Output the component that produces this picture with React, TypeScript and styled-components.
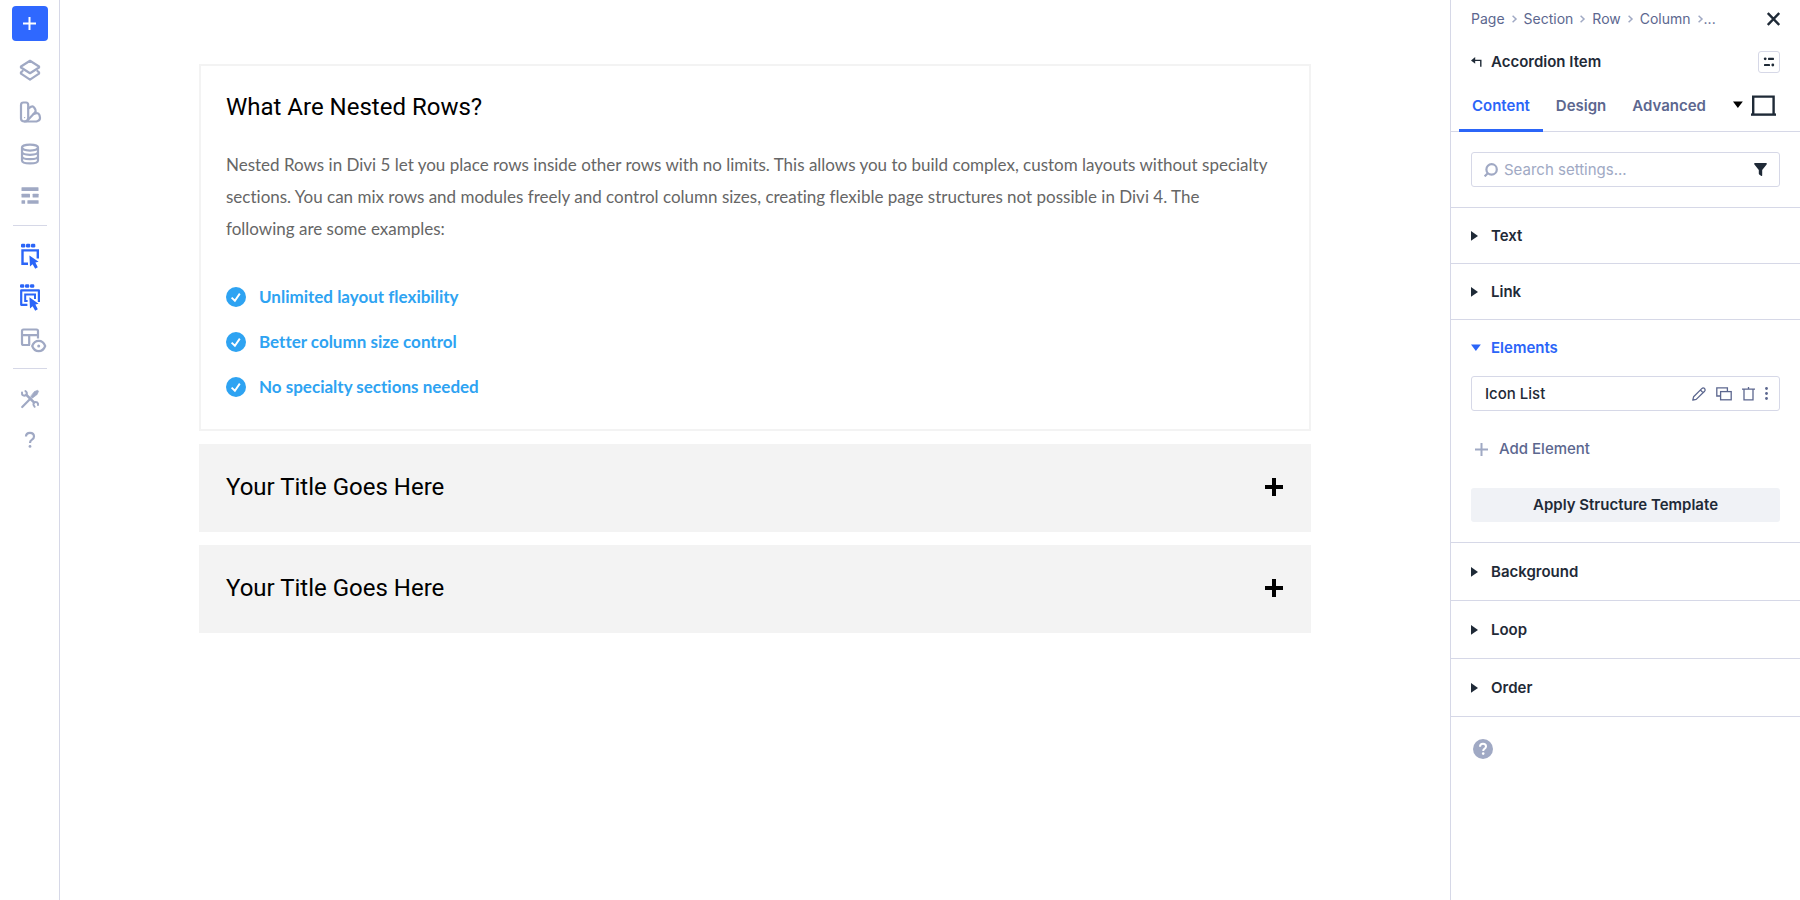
import React, { useState } from 'react';
import styled, { createGlobalStyle } from 'styled-components';

const c = {
  blue: '#2b65f8',
  ink: '#1f2a37',
  slate: '#5c678f',
  muted: '#a0a9c4',
  line: '#d6d8e7',
  sky: '#2ea3f2',
  sand: '#f3f3f3',
};

const GlobalStyle = createGlobalStyle`
  *, *::before, *::after { box-sizing: border-box; }
  body { margin: 0; background: #fff; }
  button, input { font: inherit; color: inherit; }
  button { background: none; border: 0; padding: 0; cursor: pointer; }
  svg { display: block; flex: none; }
`;

const Shell = styled.div`
  display: grid;
  grid-template-columns: 60px minmax(0, 1fr) 350px;
  min-height: 100vh;
  font-family: Inter, 'Liberation Sans', sans-serif;
  font-size: 15px;
  line-height: 20px;
  color: ${c.ink};
`;

const Rail = styled.nav`
  display: flex;
  flex-direction: column;
  align-items: center;
  border-right: 1px solid ${c.line};
  padding-top: 6px;
`;

const AddButton = styled.button`
  display: grid;
  place-items: center;
  width: 36px;
  height: 35px;
  margin-bottom: 8px;
  border-radius: 4px;
  background: #2f68ff;
`;

const RailButton = styled.button<{ $active?: boolean }>`
  display: grid;
  place-items: center;
  width: 42px;
  height: 42px;
  color: ${(p) => (p.$active ? c.blue : c.muted)};
`;

const RailDivider = styled.hr`
  width: 34px;
  margin: 8px 0;
  border: 0;
  border-top: 1px solid ${c.line};
`;

const Canvas = styled.main`
  padding-top: 64px;
`;

const AccordionList = styled.div`
  display: flex;
  flex-direction: column;
  gap: 13px;
  width: 80%;
  margin: 0 auto;
`;

const Item = styled.section<{ $open?: boolean }>`
  border: 2px solid ${c.sand};
  background: ${(p) => (p.$open ? '#fff' : c.sand)};
`;

const ItemTitle = styled.h2`
  margin: 0;
  font-family: Roboto, 'Liberation Sans', sans-serif;
  font-size: 24px;
  line-height: 28px;
  font-weight: 400;
  color: #000;
`;

const ItemToggle = styled.button<{ $open?: boolean }>`
  display: flex;
  align-items: center;
  justify-content: space-between;
  width: 100%;
  height: ${(p) => (p.$open ? 83 : 84)}px;
  padding: 0 26px 2px 25px;
  text-align: left;
`;

const ItemBody = styled.div`
  padding: 0 26px 26px 25px;
  font-family: Lato, 'Liberation Sans', sans-serif;
  font-size: 17px;
  line-height: 32px;
  font-variant-ligatures: none;
  color: #666;
`;

const Paragraph = styled.p`
  margin: 0 0 36px;
  padding-right: 13px;
`;

const IconList = styled.ul`
  display: flex;
  flex-direction: column;
  gap: 13px;
  margin: 0;
  padding: 0;
  list-style: none;
`;

const IconListItem = styled.li`
  display: flex;
  align-items: center;
  gap: 13px;
  font-weight: 700;
  color: ${c.sky};
`;

const Panel = styled.aside`
  border-left: 1px solid ${c.line};
`;

const Bar = styled.div`
  display: flex;
  align-items: center;
  justify-content: space-between;
  padding: 0 20px;
`;

const CrumbBar = styled(Bar)`
  height: 38px;
`;

const TitleBar = styled(Bar)`
  height: 48px;
`;

const Crumbs = styled.nav`
  display: flex;
  align-items: center;
  gap: 6px;
  font-size: 14px;
  color: ${c.slate};
`;

const Crumb = styled.a`
  color: inherit;
  text-decoration: none;
`;

const MoreCrumbs = styled.span`
  display: flex;
  align-items: center;
`;

const PanelTitle = styled.h1`
  display: flex;
  align-items: center;
  gap: 9px;
  margin: 0;
  font-size: 15px;
  line-height: 20px;
  font-weight: 600;
`;

const IconButton = styled.button`
  display: grid;
  place-items: center;
`;

const BoxedButton = styled(IconButton)`
  width: 22px;
  height: 22px;
  border: 1px solid ${c.line};
  border-radius: 3px;
`;

const TabBar = styled.div`
  display: flex;
  align-items: stretch;
  height: 46px;
  padding: 0 20px 0 8px;
  border-bottom: 1px solid ${c.line};
`;

const Tab = styled.button<{ $active?: boolean }>`
  padding: 0 13px 4px;
  margin-bottom: -1px;
  border-bottom: 3px solid ${(p) => (p.$active ? c.blue : 'transparent')};
  font-weight: 600;
  color: ${(p) => (p.$active ? c.blue : c.slate)};
`;

const DeviceButton = styled.button`
  display: flex;
  align-items: center;
  gap: 8px;
  margin-left: auto;
  padding: 0 4px 7px 0;
  color: #000;
`;

const SearchArea = styled.div`
  padding: 20px;
  border-bottom: 1px solid ${c.line};
`;

const SearchField = styled.label`
  display: flex;
  align-items: center;
  gap: 6px;
  height: 35px;
  padding: 0 12px;
  border: 1px solid ${c.line};
  border-radius: 3px;
`;

const SearchInput = styled.input`
  flex: 1;
  min-width: 0;
  padding: 0;
  border: 0;
  outline: 0;
  background: none;
  &::placeholder { color: ${c.muted}; opacity: 1; }
`;

const Group = styled.section`
  border-bottom: 1px solid ${c.line};
`;

const GroupToggle = styled.button<{ $open?: boolean; $tall?: boolean }>`
  display: flex;
  align-items: center;
  width: 100%;
  height: ${(p) => (p.$tall ? 57 : 55)}px;
  padding: 0 20px;
  font-weight: 600;
  color: ${(p) => (p.$open ? c.blue : c.ink)};
`;

const CaretSlot = styled.span`
  width: 20px;
`;

const GroupBody = styled.div`
  display: flex;
  flex-direction: column;
  align-items: stretch;
  padding: 1px 20px 20px;
`;

const ElementRow = styled.div`
  display: flex;
  align-items: center;
  height: 35px;
  padding: 0 11px 0 13px;
  border: 1px solid ${c.line};
  border-radius: 3px;
  font-weight: 500;
  color: ${c.ink};
`;

const ElementActions = styled.div`
  display: flex;
  align-items: center;
  gap: 10px;
  margin-left: auto;
  color: ${c.slate};
`;

const AddElement = styled.button`
  display: flex;
  align-items: center;
  gap: 11px;
  align-self: flex-start;
  height: 20px;
  margin: 28px 0 29px;
  padding-left: 4px;
  font-weight: 500;
  color: ${c.slate};
`;

const ApplyButton = styled.button`
  height: 34px;
  border-radius: 3px;
  background: #f0f2f6;
  font-weight: 600;
`;

const HelpButton = styled.button`
  margin: 22px;
`;

const Glyph = ({ children }: { children: React.ReactNode }) => (
  <svg width="32" height="32" viewBox="0 0 32 32" fill="none" stroke="currentColor" strokeWidth="2.2" strokeLinejoin="round" strokeLinecap="round">
    {children}
  </svg>
);

const LayersIcon = () => (
  <Glyph>
    <path d="M16 6.8 L25 12.5 Q25.4 13 25 13.5 L16 19.2 L7 13.5 Q6.6 13 7 12.5 Z" />
    <path d="M8.6 17 L7 18.4 Q6.6 19 7 19.6 L16 25.6 L25 19.6 Q25.4 19 25 18.4 L23.4 17" />
  </Glyph>
);

const SwatchIcon = () => (
  <Glyph>
    <path d="M7 22.5 V9 Q7 6.5 9.5 6.5 H12 Q14.2 6.5 14.2 9 V22 Q14.2 25.5 10.6 25.5 Q7 25.5 7 22.5 Z" />
    <path d="M14.2 12.5 L17 10.8 Q19 9.8 20.2 11.6 L21.4 13.6 Q22.2 15.4 20.7 16.8 L13.4 24.4" />
    <path d="M19.6 18 L22.5 17.2 Q24.7 17 25.5 19.2 L26 21.6 Q26.2 24 24 24.8 Q23 25.5 20 25.5 H10.6" />
    <circle cx="10.6" cy="21.6" r="0.7" fill="currentColor" stroke="none" />
  </Glyph>
);

const DatabaseIcon = () => (
  <Glyph>
    <ellipse cx="16" cy="9.6" rx="8" ry="3" />
    <path d="M8 9.6 V22.4 C8 26.4 24 26.4 24 22.4 V9.6 M8 13.8 C8 17.8 24 17.8 24 13.8 M8 18.2 C8 22.2 24 22.2 24 18.2" />
  </Glyph>
);

const WireframeIcon = () => (
  <Glyph>
    <g fill="currentColor" stroke="none">
      <rect x="7.5" y="7.2" width="17" height="3.8" rx="0.5" />
      <rect x="7.5" y="13.8" width="8.5" height="3.6" rx="0.5" />
      <rect x="18.6" y="13.8" width="6" height="3.6" rx="0.5" />
      <rect x="7.5" y="20.2" width="3.6" height="3.6" rx="0.5" />
      <rect x="13.4" y="20.2" width="11.2" height="3.6" rx="0.5" />
    </g>
  </Glyph>
);

const SelectIcon = () => (
  <Glyph>
    <g fill="currentColor" stroke="none">
      <rect x="7" y="4.8" width="4.3" height="3.6" rx="1.2" />
      <rect x="12" y="4.8" width="4.3" height="3.6" rx="1.2" />
      <rect x="17" y="4.8" width="4.3" height="3.6" rx="1.2" />
      <path d="M15.4 16.4 L24.6 22.8 L21.4 23.6 L23.8 28.2 L21.2 29.8 L18.6 25.2 L16 27.6 Z" />
    </g>
    <path d="M14 24.8 H8.5 V11.4 H23.8 V19.6" strokeLinejoin="miter" strokeLinecap="butt" strokeWidth="2.4" />
  </Glyph>
);

const MultiSelectIcon = () => (
  <Glyph>
    <g fill="currentColor" stroke="none">
      <rect x="6" y="3.2" width="4.3" height="3.6" rx="1.2" />
      <rect x="11" y="3.2" width="4.3" height="3.6" rx="1.2" />
      <rect x="16" y="3.2" width="4.3" height="3.6" rx="1.2" />
      <path d="M15.4 16.2 L24.6 22.8 L21.4 23.6 L23.8 28.2 L21.2 29.8 L18.6 25.2 L16 27.6 Z" />
    </g>
    <path d="M13.4 23.8 H7.2 V9.4 H24.9 V21" strokeLinecap="butt" />
    <path d="M13.6 20 H11.2 V13.4 H21 V18" strokeLinejoin="miter" strokeLinecap="butt" strokeWidth="2" />
  </Glyph>
);

const TableEyeIcon = () => (
  <svg width="40" height="32" viewBox="-4 0 40 32" fill="none" stroke="currentColor" strokeWidth="2.2" strokeLinejoin="round">
    <path d="M16 22 H9.5 Q8 22 8 20.5 V8 Q8 6.5 9.5 6.5 H22.5 Q24 6.5 24 8 V15.4 M8 12.2 H24 M15.2 12.2 V22" />
    <path d="M18.2 23 Q20.2 17.8 24.7 17.8 Q29.2 17.8 31.2 23 Q29.2 28.2 24.7 28.2 Q20.2 28.2 18.2 23 Z" />
    <circle cx="24.7" cy="23" r="1.5" fill="currentColor" stroke="none" />
  </svg>
);

const ToolsIcon = () => (
  <Glyph>
    <path d="M12.4 12.8 L20 20.4" strokeWidth="2.6" />
    <path d="M11.4 9 Q13.4 10.4 12.6 12.4 Q11 14.4 8.8 13.2 Q7.8 12.4 8 10.6" strokeWidth="2" />
    <path d="M20.6 24.8 Q18.8 23.2 19.6 21.2 Q21 19.2 23.2 20.4 Q24.4 21.4 24 23" strokeWidth="2" />
    <path d="M20.4 9.6 L23.6 8.2 L24.6 9.2 L23.2 12.4 L18.4 16.2 L16.8 14.6 Z" fill="currentColor" strokeWidth="0.6" />
    <path d="M16.6 16.4 L8.2 25" />
  </Glyph>
);

const QuestionIcon = () => (
  <Glyph>
    <path d="M12 12.6 Q12 8.8 16 8.8 Q20 8.8 20 12.4 Q20 14.4 18 15.6 Q16 16.8 16 19" strokeLinecap="butt" />
    <circle cx="16" cy="22.4" r="1.4" fill="currentColor" stroke="none" />
  </Glyph>
);

const PlusIcon = ({ size, weight, color = 'currentColor' }: { size: number; weight: number; color?: string }) => (
  <svg width={size} height={size} viewBox={`0 0 ${size} ${size}`} stroke={color} strokeWidth={weight}>
    <path d={`M${size / 2} 0 V${size} M0 ${size / 2} H${size}`} />
  </svg>
);

const CheckIcon = () => (
  <svg width="20" height="20" viewBox="0 0 20 20">
    <circle cx="10" cy="10" r="10" fill={c.sky} />
    <path d="M5.6 10.6 L8.9 13.8 L13.8 6.6" fill="none" stroke="#fff" strokeWidth="1.9" />
  </svg>
);

const Caret = ({ open }: { open?: boolean }) => (
  <svg width="10" height="10" viewBox="0 0 10 10" fill="currentColor">
    <path d={open ? 'M0 1.6 H9.8 L4.9 8 Z' : 'M0 0 V9.8 L7 4.9 Z'} />
  </svg>
);

const Chevron = () => (
  <svg width="7" height="8" viewBox="0 0 7 8" fill="none" stroke={c.muted} strokeWidth="1.5">
    <path d="M1.6 0.8 L5 4 L1.6 7.2" />
  </svg>
);

const CloseIcon = () => (
  <svg width="13" height="14" viewBox="0 0 13 14" stroke={c.ink} strokeWidth="2.4">
    <path d="M0.8 1 L12.2 13 M12.2 1 L0.8 13" />
  </svg>
);

const BackIcon = () => (
  <svg width="11" height="11" viewBox="0 0 11 11" fill="none" stroke={c.ink} strokeWidth="1.4">
    <path d="M3 3.4 H9.8 V9.8" />
    <path d="M0 3.4 L4.2 0 V6.8 Z" fill={c.ink} stroke="none" />
  </svg>
);

const OptionsIcon = () => (
  <svg width="12" height="10" viewBox="0 0 12 10" fill={c.ink}>
    <circle cx="2.2" cy="1.8" r="1.4" />
    <rect x="5" y="0.7" width="6" height="2.2" rx="0.6" />
    <rect x="1" y="6.9" width="6" height="2.2" rx="0.6" />
    <circle cx="9.8" cy="8" r="1.4" />
  </svg>
);

const LaptopIcon = () => (
  <svg width="25" height="21" viewBox="0 0 25 21" fill="none" stroke={c.ink} strokeWidth="2.4">
    <path d="M2.2 19 V1.6 H22.6 V19" />
    <path d="M0 19.6 H25" />
  </svg>
);

const SearchIcon = () => (
  <svg width="14" height="14" viewBox="0 0 14 14" fill="none" stroke={c.muted} strokeWidth="2.2">
    <circle cx="7.6" cy="6.4" r="5.2" />
    <path d="M4 10 L0.6 13.4" />
  </svg>
);

const FilterIcon = () => (
  <svg width="13" height="13" viewBox="0 0 13 13" fill={c.ink}>
    <path d="M0.8 0 H12.2 Q13.2 0.4 12.6 1.4 L8.2 7 V12.4 Q7.8 13.2 7 12.8 L5.2 11.4 Q4.8 11 4.8 10.6 V7 L0.4 1.4 Q-0.2 0.4 0.8 0 Z" />
  </svg>
);

const PencilIcon = () => (
  <svg width="14" height="14" viewBox="0 0 14 14" fill="none" stroke="currentColor" strokeWidth="1.3" strokeLinejoin="round">
    <path d="M0.8 13.2 L1.6 9.8 L10 1.4 Q11.2 0.4 12.6 1.6 Q13.6 3 12.6 4.2 L4.2 12.4 Z M8.4 3 L11 5.6" />
  </svg>
);

const CopyIcon = () => (
  <svg width="16" height="14" viewBox="0 0 16 14" fill="none" stroke="currentColor" strokeWidth="1.3">
    <path d="M4.4 9 H0.8 V0.8 H11.4 V4.2" />
    <rect x="4.6" y="4.6" width="10.6" height="8.2" />
  </svg>
);

const TrashIcon = () => (
  <svg width="13" height="14" viewBox="0 0 13 14" fill="none" stroke="currentColor" strokeWidth="1.3">
    <path d="M0 2.2 H13 M6.5 2.2 V0 M2 2.2 V12.8 H11 V2.2" />
  </svg>
);

const DotsIcon = () => (
  <svg width="3" height="13" viewBox="0 0 3 13" fill="currentColor">
    <circle cx="1.5" cy="1.5" r="1.4" />
    <circle cx="1.5" cy="6.5" r="1.4" />
    <circle cx="1.5" cy="11.5" r="1.4" />
  </svg>
);

const HelpIcon = () => (
  <svg width="20" height="20" viewBox="0 0 20 20">
    <circle cx="10" cy="10" r="10" fill={c.muted} />
    <path d="M7 7.8 Q7 4.8 10 4.8 Q13 4.8 13 7.4 Q13 8.8 11.4 9.8 Q10.2 10.6 10.2 12" fill="none" stroke="#fff" strokeWidth="2" />
    <circle cx="10.2" cy="14.6" r="1.3" fill="#fff" />
  </svg>
);

const closedItems = ['Your Title Goes Here', 'Your Title Goes Here'];
const features = ['Unlimited layout flexibility', 'Better column size control', 'No specialty sections needed'];
const crumbs = ['Page', 'Section', 'Row', 'Column'];

export default function App() {
  const [query, setQuery] = useState('');
  return (
    <>
      <GlobalStyle />
      <Shell>
        <Rail aria-label="Builder tools">
          <AddButton aria-label="Add"><PlusIcon size={13} weight={2} color="#fff" /></AddButton>
          <RailButton aria-label="Layers"><LayersIcon /></RailButton>
          <RailButton aria-label="Presets"><SwatchIcon /></RailButton>
          <RailButton aria-label="Variables"><DatabaseIcon /></RailButton>
          <RailButton aria-label="Wireframe"><WireframeIcon /></RailButton>
          <RailDivider />
          <RailButton $active aria-label="Hover mode"><SelectIcon /></RailButton>
          <RailButton $active aria-label="Multi select mode"><MultiSelectIcon /></RailButton>
          <RailButton aria-label="Layout view"><TableEyeIcon /></RailButton>
          <RailDivider />
          <RailButton aria-label="Settings"><ToolsIcon /></RailButton>
          <RailButton aria-label="Help"><QuestionIcon /></RailButton>
        </Rail>

        <Canvas>
          <AccordionList>
            <Item $open>
              <ItemTitle>
                <ItemToggle $open aria-expanded="true">What Are Nested Rows?</ItemToggle>
              </ItemTitle>
              <ItemBody>
                <Paragraph>
                  Nested Rows in Divi 5 let you place rows inside other rows with no limits. This allows you to build
                  complex, custom layouts without specialty sections. You can mix rows and modules freely and control
                  column sizes, creating flexible page structures not possible in Divi 4. The following are some
                  examples:
                </Paragraph>
                <IconList>
                  {features.map((f) => (
                    <IconListItem key={f}><CheckIcon />{f}</IconListItem>
                  ))}
                </IconList>
              </ItemBody>
            </Item>
            {closedItems.map((title, i) => (
              <Item key={i}>
                <ItemTitle>
                  <ItemToggle aria-expanded="false">{title}<PlusIcon size={18} weight={4} /></ItemToggle>
                </ItemTitle>
              </Item>
            ))}
          </AccordionList>
        </Canvas>

        <Panel>
          <CrumbBar>
            <Crumbs aria-label="Breadcrumb">
              {crumbs.map((name, i) => (
                <React.Fragment key={name}>
                  {i > 0 && <Chevron />}
                  <Crumb href="#">{name}</Crumb>
                </React.Fragment>
              ))}
              <MoreCrumbs><Chevron />...</MoreCrumbs>
            </Crumbs>
            <IconButton aria-label="Close"><CloseIcon /></IconButton>
          </CrumbBar>
          <TitleBar>
            <PanelTitle>
              <IconButton aria-label="Back"><BackIcon /></IconButton>
              Accordion Item
            </PanelTitle>
            <BoxedButton aria-label="Options"><OptionsIcon /></BoxedButton>
          </TitleBar>
          <TabBar role="tablist">
            <Tab role="tab" aria-selected="true" $active>Content</Tab>
            <Tab role="tab" aria-selected="false">Design</Tab>
            <Tab role="tab" aria-selected="false">Advanced</Tab>
            <DeviceButton aria-label="Device"><Caret open /><LaptopIcon /></DeviceButton>
          </TabBar>
          <SearchArea>
            <SearchField>
              <SearchIcon />
              <SearchInput
                aria-label="Search settings"
                placeholder="Search settings..."
                value={query}
                onChange={(e) => setQuery(e.target.value)}
              />
              <IconButton aria-label="Filter"><FilterIcon /></IconButton>
            </SearchField>
          </SearchArea>
          {['Text', 'Link'].map((name) => (
            <Group key={name}>
              <GroupToggle aria-expanded="false"><CaretSlot><Caret /></CaretSlot>{name}</GroupToggle>
            </Group>
          ))}
          <Group>
            <GroupToggle aria-expanded="true" $open><CaretSlot><Caret open /></CaretSlot>Elements</GroupToggle>
            <GroupBody>
              <ElementRow>
                Icon List
                <ElementActions>
                  <IconButton aria-label="Edit"><PencilIcon /></IconButton>
                  <IconButton aria-label="Duplicate"><CopyIcon /></IconButton>
                  <IconButton aria-label="Delete"><TrashIcon /></IconButton>
                  <IconButton aria-label="More"><DotsIcon /></IconButton>
                </ElementActions>
              </ElementRow>
              <AddElement><PlusIcon size={13} weight={2} color={c.muted} />Add Element</AddElement>
              <ApplyButton>Apply Structure Template</ApplyButton>
            </GroupBody>
          </Group>
          {['Background', 'Loop', 'Order'].map((name) => (
            <Group key={name}>
              <GroupToggle aria-expanded="false" $tall><CaretSlot><Caret /></CaretSlot>{name}</GroupToggle>
            </Group>
          ))}
          <HelpButton aria-label="Panel help"><HelpIcon /></HelpButton>
        </Panel>
      </Shell>
    </>
  );
}
